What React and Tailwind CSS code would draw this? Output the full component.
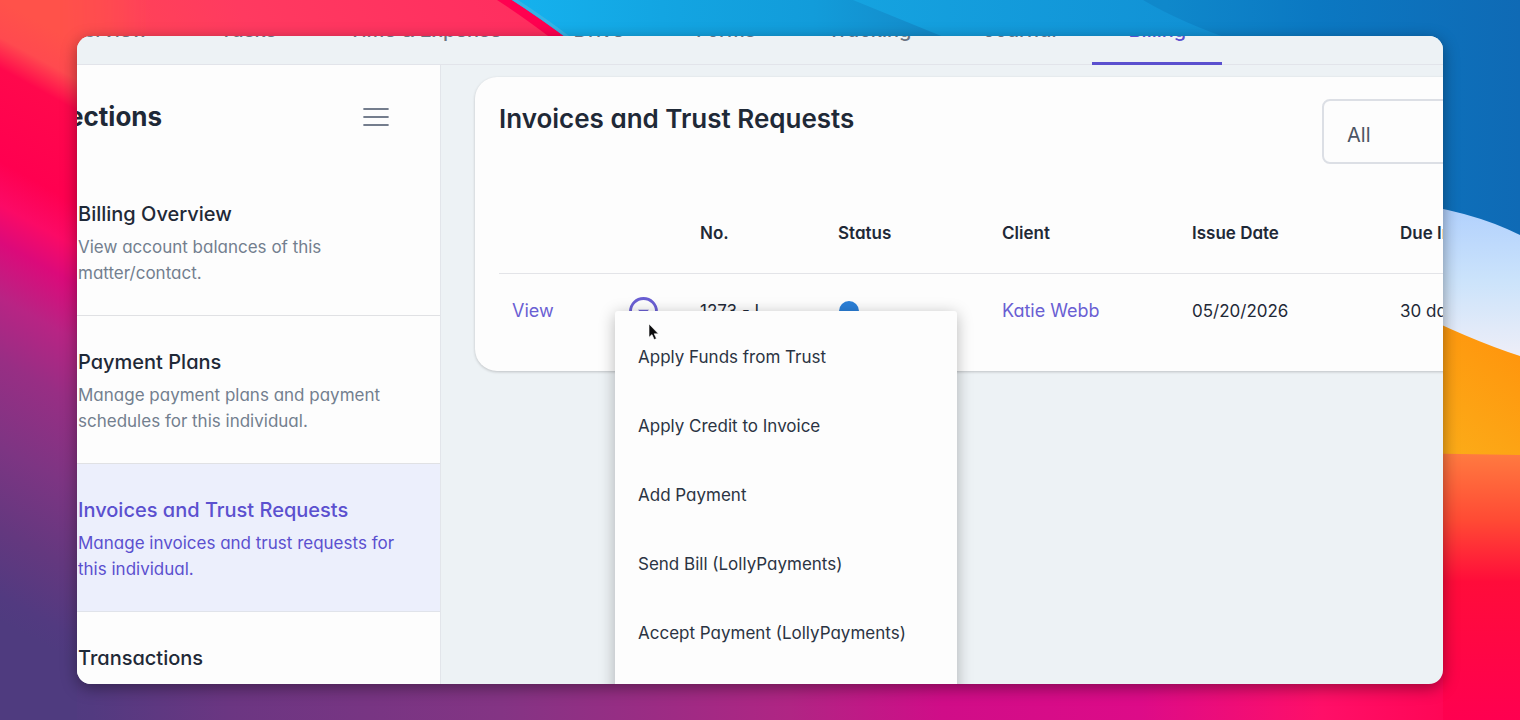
import React from "react";

const tabs = ["Overview", "Tasks", "Time & Expense", "Drive", "Forms", "Tracking", "Journal", "Billing"];

const sections = [
  { title: "Billing Overview", text: "View account balances of this matter/contact." },
  { title: "Payment Plans", text: "Manage payment plans and payment schedules for this individual." },
  { title: "Invoices and Trust Requests", text: "Manage invoices and trust requests for this individual.", active: true },
  { title: "Transactions" },
];

const actions = [
  "Apply Funds from Trust",
  "Apply Credit to Invoice",
  "Add Payment",
  "Send Bill (LollyPayments)",
  "Accept Payment (LollyPayments)",
];

function Wallpaper() {
  return (
    <svg className="absolute inset-0 h-full w-full" viewBox="0 0 1520 720" preserveAspectRatio="none" aria-hidden="true">
      <defs>
        <linearGradient id="left" x1="0" y1="0" x2="-262" y2="477" gradientUnits="userSpaceOnUse">
          <stop offset="0" stopColor="#ff524a" />
          <stop offset="0.06" stopColor="#ff4a4f" />
          <stop offset="0.11" stopColor="#ff084c" />
          <stop offset="0.26" stopColor="#ff0050" />
          <stop offset="0.33" stopColor="#fb0a66" />
          <stop offset="0.39" stopColor="#dc0a7a" />
          <stop offset="0.48" stopColor="#b82484" />
          <stop offset="0.58" stopColor="#982e84" />
          <stop offset="0.72" stopColor="#7d3583" />
          <stop offset="0.85" stopColor="#64387f" />
          <stop offset="0.96" stopColor="#523a80" />
          <stop offset="1" stopColor="#4f3b7f" />
        </linearGradient>
        <linearGradient id="top" x1="0" y1="0" x2="600" y2="-330" gradientUnits="userSpaceOnUse">
          <stop offset="0" stopColor="#ff4e4c" />
          <stop offset="0.1" stopColor="#ff4555" />
          <stop offset="0.3" stopColor="#ff3a60" />
          <stop offset="0.6" stopColor="#ff3060" />
          <stop offset="1" stopColor="#ff2458" />
        </linearGradient>
        <linearGradient id="topFade" x1="60" y1="0" x2="150" y2="0" gradientUnits="userSpaceOnUse">
          <stop offset="0" stopColor="#fff" stopOpacity="0" />
          <stop offset="1" stopColor="#fff" />
        </linearGradient>
        <mask id="topMask">
          <rect width="1520" height="60" fill="url(#topFade)" />
        </mask>
        <linearGradient id="bottom" x1="0" y1="0" x2="1520" y2="0" gradientUnits="userSpaceOnUse">
          <stop offset="0" stopColor="#4b3c7e" />
          <stop offset="0.06" stopColor="#523a80" />
          <stop offset="0.15" stopColor="#6b3682" />
          <stop offset="0.33" stopColor="#843484" />
          <stop offset="0.52" stopColor="#b02584" />
          <stop offset="0.62" stopColor="#d00d88" />
          <stop offset="0.75" stopColor="#dd0b88" />
          <stop offset="0.87" stopColor="#ff0f68" />
          <stop offset="1" stopColor="#ff004a" />
        </linearGradient>
        <linearGradient id="blue" x1="510" y1="0" x2="1520" y2="0" gradientUnits="userSpaceOnUse">
          <stop offset="0" stopColor="#15b2ee" />
          <stop offset="0.15" stopColor="#13a5e2" />
          <stop offset="0.3" stopColor="#129cda" />
          <stop offset="0.42" stopColor="#148ac9" />
          <stop offset="0.65" stopColor="#0f88cb" />
          <stop offset="0.8" stopColor="#0b78c2" />
          <stop offset="1" stopColor="#0f6ab5" />
        </linearGradient>
        <linearGradient id="facet" x1="853" y1="0" x2="1220" y2="0" gradientUnits="userSpaceOnUse">
          <stop offset="0" stopColor="#15a3e0" />
          <stop offset="1" stopColor="#1190d4" />
        </linearGradient>
        <linearGradient id="sky" x1="0" y1="210" x2="0" y2="350" gradientUnits="userSpaceOnUse">
          <stop offset="0" stopColor="#b2d1fd" />
          <stop offset="0.5" stopColor="#cbe3fb" />
          <stop offset="1" stopColor="#ebedf8" />
        </linearGradient>
        <linearGradient id="orange" x1="1520" y1="340" x2="1440" y2="445" gradientUnits="userSpaceOnUse">
          <stop offset="0" stopColor="#ff940c" />
          <stop offset="1" stopColor="#fcab18" />
        </linearGradient>
        <linearGradient id="red" x1="0" y1="454" x2="0" y2="720" gradientUnits="userSpaceOnUse">
          <stop offset="0" stopColor="#ff7a40" />
          <stop offset="0.25" stopColor="#ff4a34" />
          <stop offset="0.48" stopColor="#ff0c3a" />
          <stop offset="1" stopColor="#ff0050" />
        </linearGradient>
      </defs>
      <rect width="1520" height="720" fill="url(#left)" />
      <rect width="620" height="60" fill="url(#top)" mask="url(#topMask)" />
      <rect x="77" y="660" width="1443" height="60" fill="url(#bottom)" />
      <path d="M497 0Q525 18 556 42H580L521 0Z" fill="#ff0050" />
      <path d="M512 0Q540 18 572 42H1400V240H1520V0Z" fill="url(#blue)" />
      <path d="M512 0Q540 18 572 42H577Q546 18 518 0Z" fill="#35b4e6" />
      <path d="M853 0L956 42H1238Q1180 22 1143 0Z" fill="url(#facet)" />
      <path d="M1400 202Q1470 210 1520 235V370H1400Z" fill="url(#sky)" />
      <path d="M1400 305Q1470 340 1520 356V460H1400Z" fill="url(#orange)" />
      <path d="M1400 453L1520 455V720H1443V660H1400Z" fill="url(#red)" />
    </svg>
  );
}

function TabBar() {
  return (
    <nav className="flex h-[29px] shrink-0 items-end border-b border-[#e2e4ea] bg-[#edf2f5]" aria-label="Matter">
      <div className="-mb-px -ml-14 flex">
        {tabs.map((tab) => (
          <a
            key={tab}
            href="#"
            className={
              tab === "Billing"
                ? "border-b-[3px] border-[#5b50cf] px-9 pb-5 text-xl/6 font-medium whitespace-nowrap text-[#5b50cf]"
                : "border-b-[3px] border-transparent px-9 pb-5 text-xl/6 font-medium whitespace-nowrap text-[#6b7280]"
            }
          >
            {tab}
          </a>
        ))}
      </div>
    </nav>
  );
}

function Sidebar() {
  return (
    <aside className="-ml-9 flex w-[400px] shrink-0 flex-col border-r border-[#e2e5ea] bg-[#fdfdfd]">
      <div className="flex h-[103px] shrink-0 items-center justify-between pr-[51px] pl-2.5">
        <h2 className="text-[26px]/9 font-bold text-[#1f2937]">Sections</h2>
        <button type="button" aria-label="Toggle sections">
          <svg width="26" height="20" viewBox="0 0 26 20" fill="none" stroke="#747d8d" strokeWidth="2.2" strokeLinecap="round">
            <path d="M1.2 2H24.8M1.2 10H24.8M1.2 18H24.8" />
          </svg>
        </button>
      </div>
      {sections.map((s) => (
        <a
          key={s.title}
          href="#"
          className={
            s.active
              ? "block shrink-0 border-b border-[#e0e3ea] bg-[#eceffc] pt-8 pr-5 pb-[29px] pl-[37px] text-[#5b50cf]"
              : "block shrink-0 border-b border-[#e0e1e4] pt-8 pr-5 pb-[29px] pl-[37px] text-[#737f8f]"
          }
        >
          <h3 className={s.active ? "text-xl/7 font-medium" : "text-xl/7 font-medium text-[#1f2937]"}>{s.title}</h3>
          {s.text && <p className="mt-1.5 text-[17px]/[26px]">{s.text}</p>}
        </a>
      ))}
    </aside>
  );
}

function ActionMenu() {
  return (
    <div
      role="menu"
      className="absolute top-3.5 -left-3.5 z-10 w-[342px] rounded-t-[3px] bg-[#fdfdfd] pt-3 pb-12 text-left shadow-[0_3px_16px_rgba(0,0,0,0.28)]"
    >
      {actions.map((a) => (
        <button key={a} type="button" role="menuitem" className="block h-[69px] w-full px-[23px] text-left text-[17px] text-[#2b3443]">
          {a}
        </button>
      ))}
      <svg className="absolute top-3 left-[33px]" width="12" height="18" viewBox="0 0 12 18" aria-hidden="true">
        <path d="M1 1V14.2L4 11.6L6.2 16.6L8.4 15.6L6.2 10.8H10.4Z" fill="#0b0b0d" stroke="#fff" strokeWidth="0.6" />
      </svg>
    </div>
  );
}

function InvoiceTable() {
  return (
    <table className="mt-[29px] w-full table-fixed border-collapse text-left text-[17px] text-[#1f2937]">
      <colgroup>
        <col className="w-[117px]" />
        <col className="w-[71px]" />
        <col className="w-[138px]" />
        <col className="w-[164px]" />
        <col className="w-[190px]" />
        <col className="w-[208px]" />
        <col />
      </colgroup>
      <thead>
        <tr className="h-20 border-b border-[#e3e4e8]">
          <td />
          <td />
          {["No.", "Status", "Client", "Issue Date", "Due In"].map((h) => (
            <th key={h} scope="col" className="px-[13px] pt-0.5 font-semibold">{h}</th>
          ))}
        </tr>
      </thead>
      <tbody>
        <tr className="h-[76px]">
          <td className="px-[13px]">
            <a href="#" className="text-lg text-[#6a5fd3]">View</a>
          </td>
          <td className="px-[13px]">
            <div className="relative size-[29px]">
              <button type="button" aria-label="Invoice actions" aria-haspopup="menu" aria-expanded="true" className="block">
                <svg width="29" height="29" viewBox="0 0 29 29" fill="none" stroke="#6a5fd3" strokeWidth="2.8">
                  <circle cx="14.5" cy="14.5" r="13" />
                  <path d="M9 12.7H20L14.5 18Z" fill="#6a5fd3" stroke="none" />
                </svg>
              </button>
              <ActionMenu />
            </div>
          </td>
          <td className="px-[13px] whitespace-nowrap">1273 - I</td>
          <td className="px-[13px]">
            <span className="ml-px block size-5 rounded-full bg-[#2a7fd8]" />
          </td>
          <td className="px-[13px]">
            <a href="#" className="text-lg text-[#6a5fd3]">Katie Webb</a>
          </td>
          <td className="px-[13px]">05/20/2026</td>
          <td className="px-[13px]">30 days</td>
        </tr>
      </tbody>
    </table>
  );
}

export default function App() {
  return (
    <div className="relative h-screen overflow-hidden px-[77px] py-9 font-['Inter','Liberation_Sans',sans-serif] [font-feature-settings:'cv11']">
      <Wallpaper />
      <div className="relative flex h-full flex-col overflow-hidden rounded-[14px] bg-[#edf2f5] shadow-[0_4px_16px_rgba(0,0,0,0.4)]">
        <TabBar />
        <div className="flex min-h-0 flex-1">
          <Sidebar />
          <main className="min-w-0 flex-1 pt-3 pl-[34px]">
            <section className="-mr-[123px] rounded-[22px] bg-[#fdfdfd] px-6 pt-[22px] pb-[22px] shadow-[0_1px_3px_rgba(0,0,0,0.2)]">
              <div className="flex items-start justify-between">
                <h1 className="text-[26px]/10 font-semibold text-[#1f2937]">Invoices and Trust Requests</h1>
                <select
                  aria-label="Filter invoices"
                  className="h-[65px] w-[220px] appearance-none rounded-lg border-2 border-[#dcdfe5] bg-[#fdfdfd] px-[23px] pt-1.5 text-xl text-[#4b5563]"
                >
                  <option>All</option>
                </select>
              </div>
              <InvoiceTable />
            </section>
          </main>
        </div>
      </div>
    </div>
  );
}
